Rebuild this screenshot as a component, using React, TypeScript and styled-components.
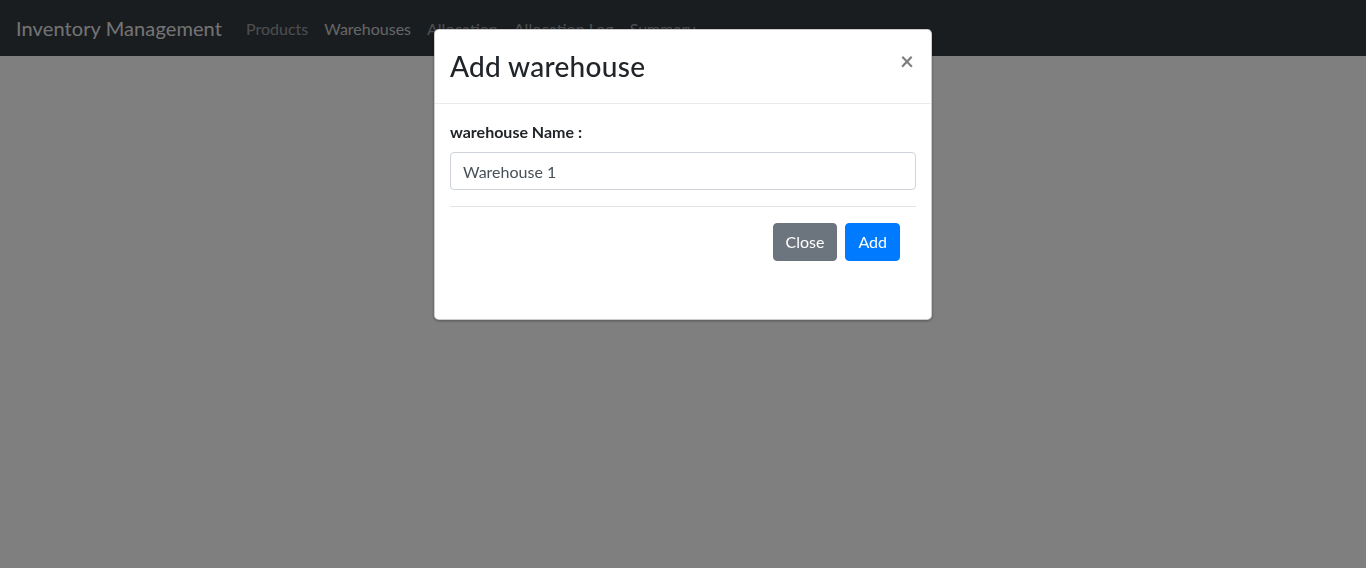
import React, { useState } from 'react';
import styled, { createGlobalStyle } from 'styled-components';

const GlobalStyle = createGlobalStyle`
  html, body {
    margin: 0;
    padding: 0;
    height: 100%;
    background: #fff;
    font-family: "Segoe UI", Lato, "Noto Sans", Arial, sans-serif;
    color: #212529;
  }
  * { box-sizing: border-box; }
`;

const Navbar = styled.nav`
  display: flex;
  align-items: center;
  height: 56px;
  padding: 0 16px;
  background: #343a40;
`;

const Brand = styled.a`
  font-size: 20px;
  line-height: 30px;
  letter-spacing: 0.1px;
  color: rgba(255, 255, 255, 0.9);
  margin-right: 16px;
  text-decoration: none;
`;

const NavLink = styled.a<{ $active?: boolean }>`
  font-size: 16px;
  padding: 0 8px;
  color: ${(p) => (p.$active ? 'rgba(255,255,255,0.75)' : 'rgba(255,255,255,0.5)')};
  text-decoration: none;
`;

const Backdrop = styled.div`
  position: fixed;
  inset: 0;
  background: rgba(0, 0, 0, 0.5);
  display: flex;
  justify-content: center;
  align-items: flex-start;
  padding-top: 29px;
`;

const Dialog = styled.div`
  width: 498px;
  background: #fff;
  border: 1px solid rgba(0, 0, 0, 0.2);
  border-radius: 4.8px;
  box-shadow: 0 1px 3px rgba(0, 0, 0, 0.35);
  display: flex;
  flex-direction: column;
`;

const Header = styled.div`
  display: flex;
  align-items: flex-start;
  justify-content: space-between;
  padding: 16px 15px;
  border-bottom: 1px solid #e9ecef;
`;

const Title = styled.h3`
  margin: 0;
  font-size: 28px;
  font-weight: 500;
  line-height: 41px;
  letter-spacing: 0.3px;
`;

const CloseX = styled.button`
  border: 0;
  background: transparent;
  padding: 19px 16px 16px;
  margin: -16px -14px -16px auto;
  font-size: 24px;
  font-weight: 700;
  line-height: 1;
  color: #000;
  opacity: 0.5;
  font-family: inherit;
  cursor: pointer;
`;

const Body = styled.div`
  padding: 16px 15px 58px;
`;

const Label = styled.label`
  display: block;
  font-size: 16px;
  font-weight: 700;
  line-height: 24px;
  margin-bottom: 8px;
`;

const Input = styled.input`
  display: block;
  width: 100%;
  height: 38px;
  padding: 6px 12px;
  font-size: 16px;
  font-family: inherit;
  color: #495057;
  border: 1px solid #ced4da;
  border-radius: 4px;
  outline: none;
`;

const Divider = styled.hr`
  margin: 16px 0;
  border: 0;
  border-top: 1px solid rgba(0, 0, 0, 0.1);
`;

const Actions = styled.div`
  display: flex;
  justify-content: flex-end;
  gap: 8px;
  padding-right: 16px;
`;

const Button = styled.button<{ $variant: 'secondary' | 'primary' }>`
  height: 38px;
  padding: 6px 12px;
  font-size: 16px;
  font-family: inherit;
  line-height: 24px;
  color: #fff;
  border: 1px solid ${(p) => (p.$variant === 'primary' ? '#007bff' : '#6c757d')};
  background: ${(p) => (p.$variant === 'primary' ? '#007bff' : '#6c757d')};
  border-radius: 4px;
  cursor: pointer;
`;

const App: React.FC = () => {
  const [name, setName] = useState('Warehouse 1');

  return (
    <>
      <GlobalStyle />
      <Navbar>
        <Brand href="#">Inventory Management</Brand>
        <NavLink href="#">Products</NavLink>
        <NavLink href="#" $active>Warehouses</NavLink>
        <NavLink href="#">Allocation</NavLink>
        <NavLink href="#">Allocation Log</NavLink>
        <NavLink href="#">Summary</NavLink>
      </Navbar>
      <Backdrop>
        <Dialog>
          <Header>
            <Title>Add warehouse</Title>
            <CloseX aria-label="Close">×</CloseX>
          </Header>
          <Body>
            <Label htmlFor="wh-name">warehouse Name :</Label>
            <Input id="wh-name" value={name} onChange={(e) => setName(e.target.value)} />
            <Divider />
            <Actions>
              <Button $variant="secondary">Close</Button>
              <Button $variant="primary">Add</Button>
            </Actions>
          </Body>
        </Dialog>
      </Backdrop>
    </>
  );
};

export default App;
